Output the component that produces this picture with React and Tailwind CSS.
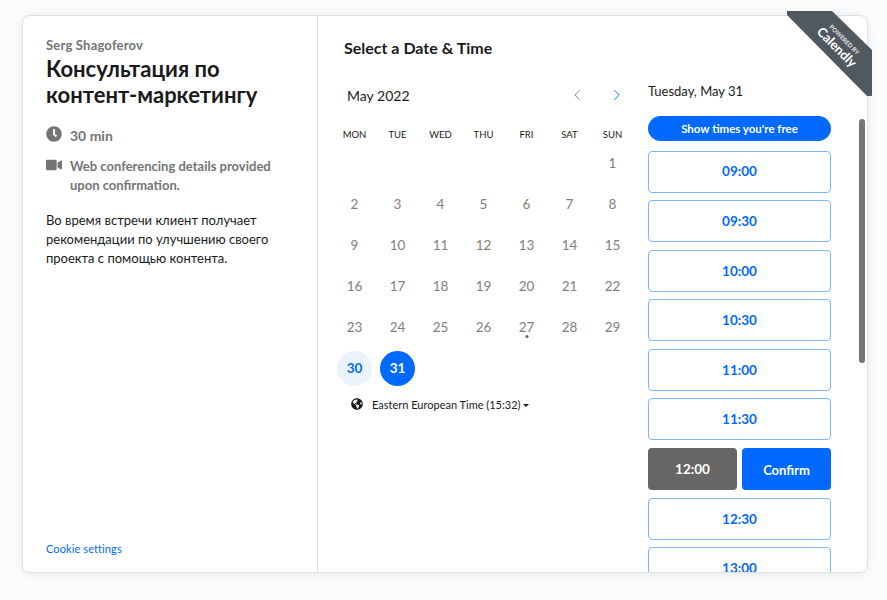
import { ChevronLeft, ChevronRight } from 'lucide-react';
import { FaClock, FaVideo, FaGlobeAmericas } from 'react-icons/fa';

const weekdays = ['MON', 'TUE', 'WED', 'THU', 'FRI', 'SAT', 'SUN'];
const times = ['09:00', '09:30', '10:00', '10:30', '11:00', '11:30', '12:00', '12:30', '13:00'];

const Slot = ({ time }) => {
  if (time === '12:00') {
    return (
      <div className="flex gap-[5px] h-[42px] shrink-0">
        <div className="flex-1 flex items-center justify-center rounded bg-[#666666] text-white text-[13.5px] font-bold">12:00</div>
        <div className="flex-1 flex items-center justify-center rounded bg-[#0069ff] text-white text-[13px] font-bold pt-[3px]">Confirm</div>
      </div>
    );
  }
  return (
    <div className="h-[42px] shrink-0 flex items-center justify-center rounded border border-[#80b4ff] text-[#0069ff] text-[13.5px] font-bold">
      {time}
    </div>
  );
};

const Day = ({ n }) => {
  if (n === 30) {
    return (
      <div className="h-[41px] flex items-center justify-center">
        <div className="w-[35px] h-[35px] rounded-full bg-[#ebf3ff] text-[#0069ff] font-bold text-[13.5px] flex items-center justify-center">30</div>
      </div>
    );
  }
  if (n === 31) {
    return (
      <div className="h-[41px] flex items-center justify-center">
        <div className="w-[35px] h-[35px] rounded-full bg-[#0069ff] text-white font-bold text-[13.5px] flex items-center justify-center">31</div>
      </div>
    );
  }
  return (
    <div className="h-[41px] flex items-center justify-center relative text-[#808080] text-[13.5px]">
      {n}
      {n === 27 && <span className="absolute left-1/2 -translate-x-1/2 top-[28px] w-[3px] h-[3px] rounded-full bg-[#666666]" />}
    </div>
  );
};

const App = () => {
  const cells = [...Array(6).fill(null), ...Array.from({ length: 31 }, (_, i) => i + 1)];

  return (
    <div className="w-[887px] h-[600px] bg-[#fafbfd] pt-[15px] pl-[22px] overflow-hidden font-['Lato',sans-serif] text-[#1a1a1a]">
      <div className="relative w-[846px] h-[558px] bg-white rounded-lg border border-[#e0e0e0] shadow-[0_1px_8px_rgba(0,0,0,0.08)] flex">
        {/* Left panel */}
        <div className="w-[295px] shrink-0 border-r border-[#e0e0e0] pl-[23px] pr-[24px] pt-[21px] pb-[16px] flex flex-col">
          <p className="text-[#757575] text-[13px] font-bold leading-[16px] tracking-[0.2px]">Serg Shagoferov</p>
          <h1 className="text-[22px] font-bold leading-[26px] mt-[3px] text-[#1a1a1a]">Консультация по контент-маркетингу</h1>
          <div className="flex items-start mt-[16px] text-[#757575] font-bold text-[14px]">
            <FaClock className="w-4 h-4 mt-[2px] shrink-0" />
            <span className="ml-2 leading-[19px] mt-[2px]">30 min</span>
          </div>
          <div className="flex items-start mt-[12px] text-[#757575] font-bold text-[13px]">
            <FaVideo className="w-4 h-4 shrink-0" />
            <span className="ml-2 leading-[19px]">Web conferencing details provided upon confirmation.</span>
          </div>
          <p className="mt-[16px] text-[13px] leading-[19px] text-[#1a1a1a]">
            Во время встречи клиент получает рекомендации по улучшению своего проекта с помощью контента.
          </p>
          <p className="mt-auto text-[11px] tracking-[0.1px] text-[#0069ff] leading-[14px]">Cookie settings</p>
        </div>

        {/* Right panel */}
        <div className="flex-1 pl-[26px] pt-[22px] overflow-hidden rounded-r-lg relative">
          <h2 className="text-[16px] font-bold leading-[20px] text-[#1a1a1a]">Select a Date &amp; Time</h2>
          <div className="flex mt-[25px]">
            {/* Calendar */}
            <div className="w-[304px] shrink-0 -ml-[11px]">
              <div className="flex items-center h-[24px] pl-[14px] pr-[11px]">
                <span className="text-[14px]">May 2022</span>
                <ChevronLeft className="w-[18px] h-[18px] ml-auto text-[#757575]" strokeWidth={1.25} />
                <ChevronRight className="w-[18px] h-[18px] ml-[22px] text-[#0069ff]" strokeWidth={1.25} />
              </div>
              <div className="grid grid-cols-[repeat(7,43px)] mt-[22px]">
                {weekdays.map((d) => (
                  <div key={d} className="text-center text-[9.5px] leading-[12px] h-[12px]">{d}</div>
                ))}
              </div>
              <div className="grid grid-cols-[repeat(7,43px)] mt-[2px]">
                {cells.map((n, i) => (n ? <Day key={i} n={n} /> : <div key={i} className="h-[41px]" />))}
              </div>
              <div className="flex items-center mt-[9px] pl-[18px] text-[11px] leading-[14px]">
                <FaGlobeAmericas className="w-[12px] h-[12px] -mt-[3px]" />
                <span className="ml-[9px]">Eastern European Time (15:32)</span>
                <span className="ml-[3px] w-0 h-0 border-x-[3px] border-x-transparent border-t-[3px] border-t-[#1a1a1a]" />
              </div>
            </div>

            {/* Times */}
            <div className="w-[183px] ml-[11px] shrink-0">
              <div className="h-[18px] text-[13px] flex items-center">Tuesday, May 31</div>
              <div className="mt-[15px] h-[25px] rounded-full bg-[#0069ff] text-white text-[11.5px] font-bold flex items-center justify-center">Show times you're free</div>
              <div className="flex flex-col gap-[7.6px] mt-[9.5px]">
                {times.map((t) => <Slot key={t} time={t} />)}
              </div>
            </div>
          </div>
          {/* scrollbar */}
          <div className="absolute right-[2px] top-[103px] w-[6px] h-[244px] rounded-full bg-[#757575]" />
        </div>

        {/* Ribbon */}
        <div className="absolute right-[-5px] top-[-5px] w-[85px] h-[85px] overflow-hidden pointer-events-none">
          <svg viewBox="0 0 85 85" className="absolute inset-0 w-full h-full">
            <polygon points="0,0 45,0 85,39 85,85 80,85 0,4" fill="#505960" />
          </svg>
          <div className="absolute left-[8px] top-[23px] w-[90px] rotate-45 text-center text-white leading-none">
            <div className="text-[6px] font-bold leading-[8px] text-[#e6e6e6]">POWERED BY</div>
            <div className="text-[13px] font-bold leading-[12px]">Calendly</div>
          </div>
        </div>
      </div>
    </div>
  );
};

export default App;
